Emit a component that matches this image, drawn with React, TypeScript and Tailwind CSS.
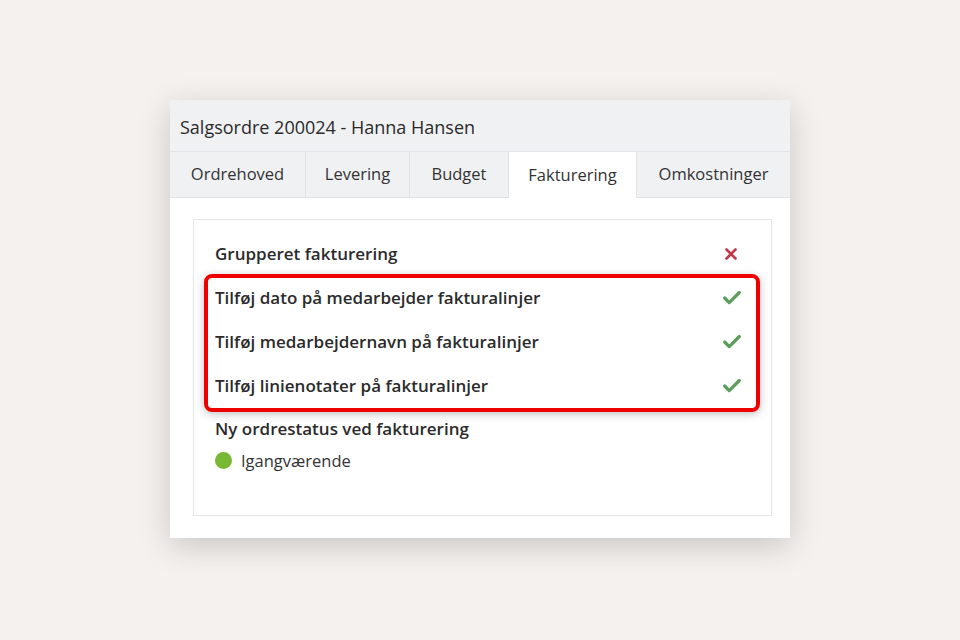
import { Check, X } from "lucide-react";

const tabs = ["Ordrehoved", "Levering", "Budget", "Fakturering", "Omkostninger"];
const tabWidths = ["w-[136px]", "w-[104px]", "w-[99px]", "w-[128px]", "flex-1"];

function Row({ label, on }: { label: string; on: boolean }) {
  return (
    <div className="flex h-[44px] items-center justify-between">
      <span className="text-[17px] font-semibold text-[#2b2b2b]">{label}</span>
      {on ? (
        <Check className="h-[22px] w-[22px] text-[#5a9e5a]" strokeWidth={3.5} />
      ) : (
        <X className="h-[18px] w-[18px] text-[#c0394b]" strokeWidth={3.5} />
      )}
    </div>
  );
}

export default function App() {
  return (
    <div
      className="flex h-[640px] w-[960px] justify-center bg-[#f5f1ee] pt-[100px]"
      style={{ fontFamily: '"Open Sans", "Noto Sans", sans-serif' }}
    >
      <div className="h-[438px] w-[620px] bg-white shadow-[0_8px_30px_rgba(0,0,0,0.18)]">
        <div className="flex h-[52px] items-center border-b border-[#e2e4e7] bg-[#f0f1f3] px-[10px] pt-[4px]">
          <span className="text-[18px] text-[#2b2b2b]">Salgsordre 200024 - Hanna Hansen</span>
        </div>
        <div className="flex h-[46px] bg-[#f0f1f3]">
          {tabs.map((t, i) => (
            <div
              key={t}
              className={`${tabWidths[i]} flex items-center justify-center border-r border-[#e0e2e5] text-[16.5px] text-[#333] last:border-r-0 ${
                t === "Fakturering" ? "bg-white" : "border-b border-b-[#e0e2e5]"
              }`}
            >
              {t}
            </div>
          ))}
        </div>
        <div className="pl-[23px] pr-[18px] pt-[21px]">
          <div className="h-[297px] border border-[#e6e6e6] pl-[21px] pt-[12px]">
            <div className="pr-[31px]">
              <Row label="Grupperet fakturering" on={false} />
            </div>
            <div className="-ml-[11px] mr-[11px] -mt-[2px] rounded-[8px] border-[4px] border-[#ee0000] pl-[7px] pr-[13px] shadow-[0_2px_8px_rgba(0,0,0,0.25)]">
              <div className="-mt-[2px]">
                <Row label="Tilføj dato på medarbejder fakturalinjer" on />
                <Row label="Tilføj medarbejdernavn på fakturalinjer" on />
                <Row label="Tilføj linienotater på fakturalinjer" on />
              </div>
            </div>
            <div className="mt-[4px] text-[17px] font-semibold text-[#2b2b2b]">
              Ny ordrestatus ved fakturering
            </div>
            <div className="mt-[7px] flex items-center gap-[9px]">
              <span className="h-[17px] w-[17px] rounded-full bg-[#78b833]" />
              <span className="text-[16.5px] text-[#333]">Igangværende</span>
            </div>
          </div>
        </div>
      </div>
    </div>
  );
}
